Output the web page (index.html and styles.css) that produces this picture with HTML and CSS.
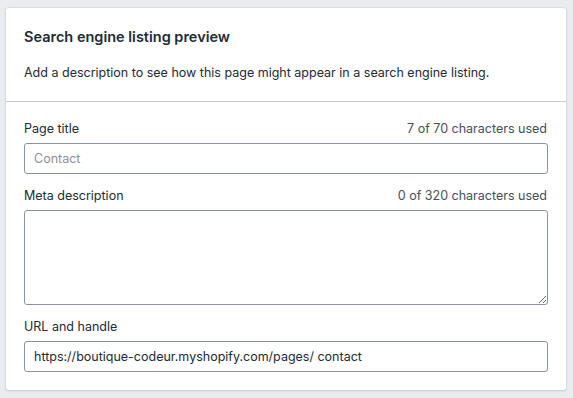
FILE: index.html
```html
<!DOCTYPE html>
<html lang="en">
<head>
    <meta charset="UTF-8">
    <title>Search engine listing preview</title>
    <link rel="stylesheet" href="styles.css">
</head>
<body>

    <!-- Card -->
    <div class="card">
        <div class="card-section">
            <h2 class="card-title">Search engine listing preview</h2>
            <p class="card-text">Add a description to see how this page might appear in a search engine listing.</p>
        </div>

        <div class="card-section fields">
            <div class="field">
                <div class="label-row">
                    <label for="page-title">Page title</label>
                    <span class="counter">7 of 70 characters used</span>
                </div>
                <input type="text" id="page-title" placeholder="Contact">
            </div>

            <div class="field">
                <div class="label-row">
                    <label for="meta-desc">Meta description</label>
                    <span class="counter">0 of 320 characters used</span>
                </div>
                <textarea id="meta-desc"></textarea>
            </div>

            <div class="field">
                <div class="label-row">
                    <label for="url-handle">URL and handle</label>
                </div>
                <input type="text" id="url-handle" value="https://boutique-codeur.myshopify.com/pages/ contact">
            </div>
        </div>
    </div>

</body>
</html>
```

FILE: styles.css
```css
body {
    font-family: Inter, "Noto Sans", sans-serif;
    background-color: #ebecf0;
    margin: 0;
    padding: 8px 7px 8px 6px;
    color: #212b36;
}
/* Card */
.card {
    background-color: #fff;
    border-radius: 3px;
    box-shadow: 0 0 0 1px rgba(63, 63, 68, 0.05), 0 1px 3px 0 rgba(63, 63, 68, 0.15);
}
.card-section {
    padding: 19px 18px 18px;
}
.card-section + .card-section {
    border-top: 1px solid #c9cacf;
    padding-top: 17px;
}
.card-title {
    font-size: 14.5px;
    font-weight: 600;
    line-height: 20px;
    margin: 0;
}
.card-text {
    font-size: 12.5px;
    line-height: 20px;
    margin: 16px 0 0;
}
/* Fields */
.fields {
    display: flex;
    flex-direction: column;
    gap: 12px;
}
.label-row {
    display: flex;
    justify-content: space-between;
    font-size: 12.5px;
    line-height: 20px;
    margin-bottom: 4px;
}
.counter {
    color: #454f5b;
    padding-right: 1px;
}
input[type="text"], textarea {
    display: block;
    width: 100%;
    box-sizing: border-box;
    font-family: inherit;
    font-size: 12.5px;
    color: #212b36;
    border: 1px solid #8c92a6;
    border-radius: 3px;
    padding: 0 9px;
    margin: 0;
    background: #fff;
}
input[type="text"] {
    height: 31px;
}
input::placeholder {
    color: #8a8f99;
}
textarea {
    height: 95px;
    resize: vertical;
}
```
